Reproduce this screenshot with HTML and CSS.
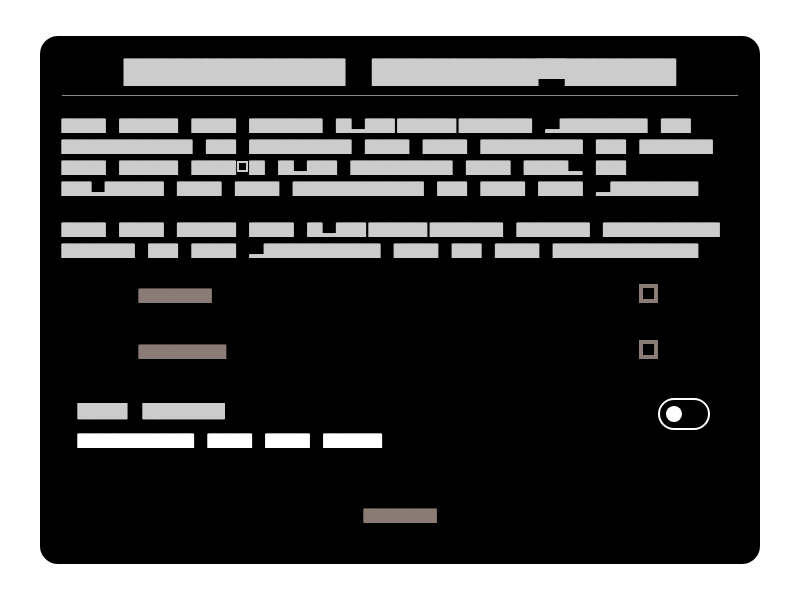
FILE: index.html
```html
<!DOCTYPE html>
<html lang="en">
<head>
<meta charset="utf-8">
<title>Settings</title>
<link rel="stylesheet" href="styles.css">
</head>
<body>
<section class="dialog" role="dialog" aria-labelledby="dlg-title">
  <header class="head">
    <h1 class="title" id="dlg-title">████████████████ ████████████<span class="up">▆▆</span>████████</h1>
  </header>

  <p class="text">██████ ████████ ██████ ██████████ ██▂▂████<span class="nb"></span>████████<span class="nb"></span>██████████ ▂▂████████████ ████<br>██████████████████ ████ ██████████████ ██████ ██████ ██████████████ ████ ██████████<br>██████ ████████ ██████<span class="tofu"></span>██ ██▂▂████ ██████████████ ██████ ██████▂▂ ████<br>████▂▂████████ ██████ ██████ ██████████████████ ████ ██████ ██████ ▂▂████████████</p>

  <p class="text">██████ ██████ ████████ ██████ ██▂▂████<span class="nb"></span>████████<span class="nb"></span>██████████ ██████████ ████████████████<br>██████████ ████ ██████ ▂▂████████████████ ██████ ████ ██████ ████████████████████</p>

  <ul class="options">
    <li class="option">
      <span class="option-label">██████████</span>
      <span class="check" role="checkbox" aria-checked="false"></span>
    </li>
    <li class="option">
      <span class="option-label">████████████</span>
      <span class="check" role="checkbox" aria-checked="false"></span>
    </li>
  </ul>

  <div class="toggle-row">
    <div class="toggle-text">
      <div class="toggle-label">██████ ██████████</div>
      <div class="toggle-desc">████████████████ ██████ ██████ ████████</div>
    </div>
    <span class="switch" role="switch" aria-checked="false"><span class="knob"></span></span>
  </div>

  <div class="actions">
    <button class="btn" type="button">██████████</button>
  </div>
</section>
</body>
</html>
```

FILE: styles.css
```css
* {
  box-sizing: border-box;
}

html,
body {
  margin: 0;
  height: 100%;
}

body {
  background: #ffffff;
  display: flex;
  align-items: center;
  justify-content: center;
  font-family: "DejaVu Sans Mono", monospace;
}

.dialog {
  width: 720px;
  height: 528px;
  background: #000000;
  border-radius: 18px;
  padding: 19px 22px 30px;
  display: flex;
  flex-direction: column;
  text-shadow: 0.5px 0 currentColor, -0.5px 0 currentColor;
  will-change: transform;
}

.head {
  padding-bottom: 6px;
  border-bottom: 1px solid #888888;
  text-align: center;
}

.title {
  margin: 0;
  font-size: 22.9px;
  line-height: 34px;
  font-weight: normal;
  color: #cccccc;
  word-spacing: 0.602em;
  white-space: nowrap;
}

.up {
  vertical-align: 0.291em;
  line-height: 0;
}

.text {
  margin: 20px 0 0;
  font-size: 12px;
  line-height: 21px;
  color: #cccccc;
  word-spacing: 0.602em;
  white-space: nowrap;
}

.nb {
  display: inline-block;
  width: 3.5px;
}

.tofu {
  display: inline-block;
  width: 11px;
  height: 11px;
  margin: 0 1.7px;
  border: 2px solid #cccccc;
}

.options {
  list-style: none;
  margin: 14px 0 0;
  padding: 0 80px 0 77px;
}

.option {
  display: flex;
  justify-content: space-between;
  align-items: flex-start;
  height: 56px;
  padding-top: 8px;
}

.option-label {
  font-size: 12px;
  line-height: 24px;
  color: #8a7b75;
}

.check {
  width: 19px;
  height: 19px;
  border: 4px solid #8a7b75;
}

.toggle-row {
  display: flex;
  justify-content: space-between;
  align-items: flex-start;
  margin-top: 10px;
  padding: 0 28px 0 16px;
}

.toggle-text {
  padding-top: 3px;
}

.toggle-label {
  font-size: 13.5px;
  line-height: 20px;
  color: #cccccc;
  word-spacing: 0.602em;
  white-space: nowrap;
}

.toggle-desc {
  margin-top: 10px;
  font-size: 12px;
  line-height: 20px;
  color: #ffffff;
  word-spacing: 0.602em;
  white-space: nowrap;
}

.switch {
  display: flex;
  align-items: center;
  width: 52px;
  height: 32px;
  padding-left: 6px;
  border: 2px solid #ffffff;
  border-radius: 16px;
}

.knob {
  width: 16px;
  height: 16px;
  border-radius: 50%;
  background: #ffffff;
}

.actions {
  margin-top: auto;
  text-align: center;
}

.btn {
  padding: 0;
  border: 0;
  background: none;
  font-family: inherit;
  font-size: 12px;
  line-height: 36px;
  color: #8a7b75;
  text-shadow: 0.5px 0 currentColor, -0.5px 0 currentColor;
}
```
